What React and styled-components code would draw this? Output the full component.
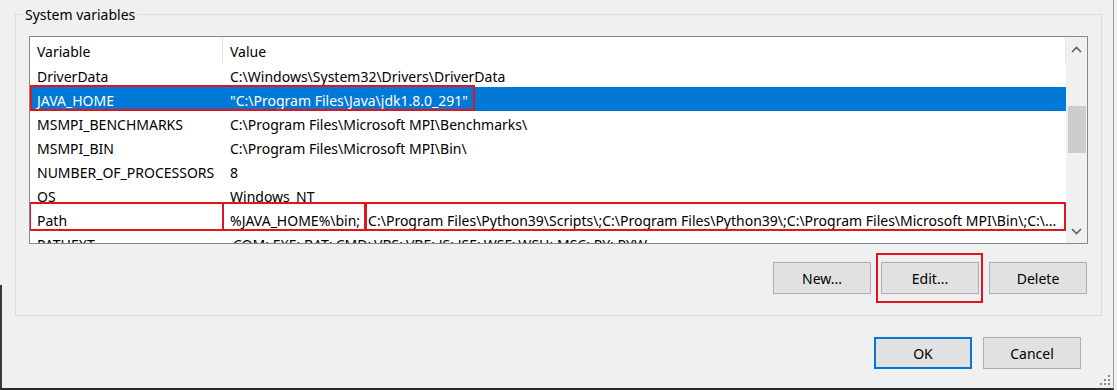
import React from "react";
import styled, { createGlobalStyle } from "styled-components";

const GlobalStyle = createGlobalStyle`
  body {
    margin: 0;
    background: #f0f0f0;
    font-family: "Segoe UI", "Noto Sans", "Open Sans", sans-serif;
  }
`;

const Window = styled.div`
  position: relative;
  box-sizing: border-box;
  width: 1114px;
  height: 390px;
  padding: 14px 0 0 15px;
  background: #f0f0f0;
  border-right: 1px solid #9a9a9a;
  border-bottom: 2px solid #2b2b2b;
  font-size: 14px;
  color: #000;

  &::before {
    content: "";
    position: absolute;
    left: 0;
    top: 285px;
    bottom: 0;
    width: 2px;
    background: #3a3a3a;
  }
`;

const Group = styled.div`
  position: relative;
  box-sizing: border-box;
  width: 1087px;
  height: 302px;
  border: 1px solid #dcdcdc;
  padding: 21px 13px 0 13px;
  display: flex;
  flex-direction: column;
`;

const GroupLabel = styled.span`
  position: absolute;
  top: -10px;
  left: 7px;
  padding: 0 2px;
  background: #f0f0f0;
  font-size: 14px;
  line-height: 20px;
`;

const List = styled.div`
  box-sizing: border-box;
  height: 208px;
  border: 1px solid #828790;
  background: #fff;
  display: grid;
  grid-template-columns: 1fr 21px;
  overflow: hidden;
`;

const Rows = styled.div`
  overflow: hidden;
`;

const HeaderRow = styled.div`
  display: grid;
  grid-template-columns: 193px 1fr;
  height: 26px;
  align-items: center;
`;

const HeaderCell = styled.div`
  height: 100%;
  display: flex;
  align-items: center;
  padding: 2px 0 0 7px;
  border-right: 1px solid #e5e5e5;
  box-sizing: border-box;
`;

const Row = styled.div`
  position: relative;
  display: grid;
  grid-template-columns: 193px 1fr;
  height: 24px;
  align-items: center;
  background: ${({ $selected }) => ($selected ? "#0078d7" : "transparent")};
  color: ${({ $selected }) => ($selected ? "#fff" : "#000")};
`;

const Cell = styled.div`
  padding: 2px 0 0 7px;
  white-space: nowrap;
  overflow: hidden;
`;

const Segment = styled.span`
  padding-right: ${({ $gap }) => $gap || 0}px;
`;

const Mark = styled.div`
  position: absolute;
  box-sizing: border-box;
  border: 2px solid #e3141c;
  pointer-events: none;
`;

const ScrollBar = styled.div`
  background: #f0f0f0;
  display: flex;
  flex-direction: column;
  align-items: center;
  position: relative;
`;

const Arrow = styled.div`
  height: 24px;
  width: 100%;
  display: flex;
  align-items: center;
  justify-content: center;
`;

const Track = styled.div`
  flex: 1;
  width: 100%;
  padding-top: 45px;
  box-sizing: border-box;
`;

const Thumb = styled.div`
  margin: 0 auto;
  width: 18px;
  height: 47px;
  background: #cdcdcd;
`;

const ButtonRow = styled.div`
  display: flex;
  justify-content: flex-end;
  gap: ${({ $gap }) => $gap}px;
  margin-top: ${({ $top }) => $top}px;
  padding-right: ${({ $right }) => $right}px;
`;

const Button = styled.div`
  position: relative;
  box-sizing: border-box;
  width: 98px;
  height: 32px;
  background: #e1e1e1;
  border: ${({ $default }) =>
    $default ? "2px solid #0078d7" : "1px solid #adadad"};
  display: flex;
  align-items: center;
  justify-content: center;
  font-size: 14px;
`;

const Grip = styled.svg`
  position: absolute;
  right: 2px;
  bottom: 2px;
`;

const rows = [
  ["DriverData", ["C:\\Windows\\System32\\Drivers\\DriverData"]],
  ["JAVA_HOME", ['"C:\\Program Files\\Java\\jdk1.8.0_291"']],
  ["MSMPI_BENCHMARKS", ["C:\\Program Files\\Microsoft MPI\\Benchmarks\\"]],
  ["MSMPI_BIN", ["C:\\Program Files\\Microsoft MPI\\Bin\\"]],
  ["NUMBER_OF_PROCESSORS", ["8"]],
  ["OS", ["Windows_NT"]],
  [
    "Path",
    [
      "%JAVA_HOME%\\bin;",
      "C:\\Program Files\\Python39\\Scripts\\;C:\\Program Files\\Python39\\;C:\\Program Files\\Microsoft MPI\\Bin\\;C:\\...",
    ],
  ],
  ["PATHEXT", [".COM;.EXE;.BAT;.CMD;.VBS;.VBE;.JS;.JSE;.WSF;.WSH;.MSC;.PY;.PYW"]],
];

const marks = {
  JAVA_HOME: [{ left: 0, width: 445, top: -2, height: 26 }],
  Path: [
    { left: -1, width: 195, top: -5, height: 29 },
    { left: 192, width: 144, top: -5, height: 29 },
    { left: 335, width: 701, top: -5, height: 29 },
  ],
};

const Chevron = ({ up }) => (
  <svg width="11" height="7" viewBox="0 0 11 7">
    <polyline
      points={up ? "1,6 5.5,1.5 10,6" : "1,1 5.5,5.5 10,1"}
      fill="none"
      stroke="#606060"
      strokeWidth="1.6"
    />
  </svg>
);

export default function App() {
  return (
    <>
      <GlobalStyle />
      <Window>
        <Group>
          <GroupLabel>System variables</GroupLabel>
          <List>
            <Rows>
              <HeaderRow>
                <HeaderCell>Variable</HeaderCell>
                <HeaderCell>Value</HeaderCell>
              </HeaderRow>
              {rows.map(([name, parts]) => (
                <Row key={name} $selected={name === "JAVA_HOME"}>
                  <Cell>{name}</Cell>
                  <Cell>
                    {parts.map((p, i) => (
                      <Segment key={i} $gap={i < parts.length - 1 ? 8 : 0}>
                        {p}
                      </Segment>
                    ))}
                  </Cell>
                  {(marks[name] || []).map((m, i) => (
                    <Mark
                      key={i}
                      style={{
                        left: m.left,
                        width: m.width,
                        top: m.top,
                        height: m.height,
                      }}
                    />
                  ))}
                </Row>
              ))}
            </Rows>
            <ScrollBar>
              <Arrow>
                <Chevron up />
              </Arrow>
              <Track>
                <Thumb />
              </Track>
              <Arrow>
                <Chevron />
              </Arrow>
            </ScrollBar>
          </List>
          <ButtonRow $gap={10} $top={18} $right={1}>
            <Button>New...</Button>
            <Button>
              Edit...
              <Mark style={{ left: -6, top: -10, width: 107, height: 50 }} />
            </Button>
            <Button>Delete</Button>
          </ButtonRow>
        </Group>
        <ButtonRow $gap={11} $top={21} $right={32}>
          <Button $default>OK</Button>
          <Button>Cancel</Button>
        </ButtonRow>
        <Grip width="12" height="12" viewBox="0 0 12 12">
          {[
            [10, 2],
            [6, 6],
            [10, 6],
            [2, 10],
            [6, 10],
            [10, 10],
          ].map(([x, y]) => (
            <rect key={`${x}-${y}`} x={x - 1} y={y - 1} width="2" height="2" fill="#8a8a8a" />
          ))}
        </Grip>
      </Window>
    </>
  );
}
